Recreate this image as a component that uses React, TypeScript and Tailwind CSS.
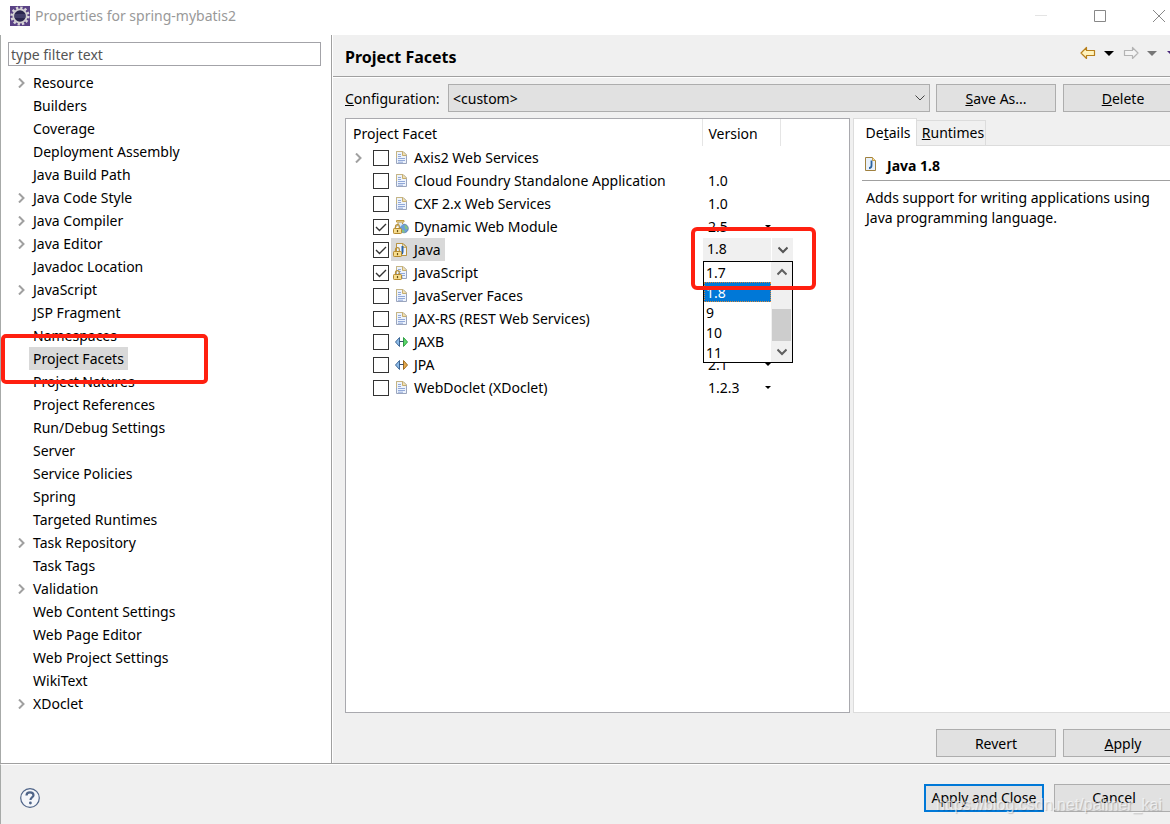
import { useState } from 'react';
import type { ReactNode } from 'react';
import clsx from 'clsx';

type IconKind = 'page' | 'web' | 'java' | 'pageLocked' | 'jaxb' | 'jpa';

interface Page {
  label: string;
  children?: boolean;
}

interface Facet {
  name: string;
  icon: IconKind;
  version?: string;
  picker?: boolean;
  checked?: boolean;
  children?: boolean;
}

const PAGES: Page[] = [
  { label: 'Resource', children: true },
  { label: 'Builders' },
  { label: 'Coverage' },
  { label: 'Deployment Assembly' },
  { label: 'Java Build Path' },
  { label: 'Java Code Style', children: true },
  { label: 'Java Compiler', children: true },
  { label: 'Java Editor', children: true },
  { label: 'Javadoc Location' },
  { label: 'JavaScript', children: true },
  { label: 'JSP Fragment' },
  { label: 'Namespaces' },
  { label: 'Project Facets' },
  { label: 'Project Natures' },
  { label: 'Project References' },
  { label: 'Run/Debug Settings' },
  { label: 'Server' },
  { label: 'Service Policies' },
  { label: 'Spring' },
  { label: 'Targeted Runtimes' },
  { label: 'Task Repository', children: true },
  { label: 'Task Tags' },
  { label: 'Validation', children: true },
  { label: 'Web Content Settings' },
  { label: 'Web Page Editor' },
  { label: 'Web Project Settings' },
  { label: 'WikiText' },
  { label: 'XDoclet', children: true },
];

const FACETS: Facet[] = [
  { name: 'Axis2 Web Services', icon: 'page', children: true },
  { name: 'Cloud Foundry Standalone Application', icon: 'page', version: '1.0' },
  { name: 'CXF 2.x Web Services', icon: 'page', version: '1.0' },
  { name: 'Dynamic Web Module', icon: 'web', version: '2.5', picker: true, checked: true },
  { name: 'Java', icon: 'java', checked: true },
  { name: 'JavaScript', icon: 'pageLocked', checked: true },
  { name: 'JavaServer Faces', icon: 'page' },
  { name: 'JAX-RS (REST Web Services)', icon: 'page' },
  { name: 'JAXB', icon: 'jaxb' },
  { name: 'JPA', icon: 'jpa', version: '2.1', picker: true },
  { name: 'WebDoclet (XDoclet)', icon: 'page', version: '1.2.3', picker: true },
];

const JAVA_VERSIONS = ['1.7', '1.8', '9', '10', '11'];

function Chevron({ dir, className }: { dir: 'right' | 'down' | 'up'; className?: string }) {
  const d = { right: 'M3 0.500l4.500 4.500L3 9.500', down: 'M.5 2.500L5 7l4.500-4.500', up: 'M.5 7.500L5 3l4.500 4.500' }[dir];
  return (
    <svg viewBox="0 0 10 10" className={clsx('h-[10px] w-[10px] shrink-0', className)} fill="none" stroke="currentColor" aria-hidden="true">
      <path d={d} />
    </svg>
  );
}

function Triangle({ className }: { className: string }) {
  return (
    <svg viewBox="0 0 10 5" className={className} fill="currentColor" aria-hidden="true">
      <path d="M0 0h10L5 5z" />
    </svg>
  );
}

function Lock() {
  return (
    <g>
      <path d="M2.500 10V7.500a1.900 1.900 0 0 1 3.800 0V10" fill="none" stroke="#b8913a" strokeWidth="1.200" />
      <rect x="0.500" y="9.500" width="8" height="5" rx="0.800" fill="#f7dd8e" stroke="#b58a2e" />
      <path d="M4.500 11v2.200" stroke="#6b5010" strokeWidth="1.200" />
    </g>
  );
}

function Sheet({ lines = true }: { lines?: boolean }) {
  return (
    <g>
      <path d="M3.500 1.500h6.500l3.500 3.500v8.500h-10z" fill="#edf3fc" stroke="#9aa5bd" />
      <path d="M3.500 8V1.500h6.500l3.500 3.500" fill="none" stroke="#c6b582" />
      <path d="M9.500 1.500V5.500h4" fill="#f3e0ae" stroke="#c6ae70" />
      {lines && <path d="M5 4.500h3M5 6.500h3M5 8.500h7M5 10.500h7M5 12.200h5" stroke="#91a8d8" />}
    </g>
  );
}

function FacetIcon({ kind }: { kind: IconKind }) {
  return (
    <svg viewBox="0 0 16 16" className="h-4 w-4 shrink-0" aria-hidden="true">
      {kind === 'page' && <Sheet />}
      {kind === 'pageLocked' && <><Sheet /><Lock /></>}
      {kind === 'java' && (
        <>
          <Sheet lines={false} />
          <path d="M13.500 5v8.500h-10V1.500h6.500z" fill="none" stroke="#b9933f" />
          <path d="M9.500 4v6c0 1.200-.5 1.800-1.500 2" fill="none" stroke="#2d62a3" strokeWidth="2" />
          <Lock />
        </>
      )}
      {kind === 'web' && (
        <>
          <circle cx="11" cy="9.500" r="4.300" fill="#6b9fd8" stroke="#5878a8" strokeWidth="0.800" />
          <path d="M11.500 6c2 0 3.500 2 3.300 4l-2 .5-1-2zM8.500 11l2.500 0 1 2.500-2 .3z" fill="#86c281" />
          <path d="M5.500 3h4v2.500L7 8 3 8z" fill="#dce9f8" />
          <path d="M3.500 1.500h7.500v1.500h-7.500z" fill="#faebb8" stroke="#c09a42" />
          <path d="M5 3.500v2L2 8.500M9.500 3.500V5" fill="none" stroke="#c09a42" />
          <Lock />
        </>
      )}
      {(kind === 'jaxb' || kind === 'jpa') && (
        <>
          <path d="M6.500 3.500v9L2.500 8z" fill="#8dbbe8" stroke="#3d6796" />
          <path
            d="M10.500 3.500v9l4-4.500z"
            fill={kind === 'jaxb' ? '#5bd867' : '#e5a94e'}
            stroke={kind === 'jaxb' ? '#2f9e45' : '#a06c1d'}
          />
          <path d="M6.500 7.500h4" stroke="#3c4f70" />
        </>
      )}
    </svg>
  );
}

function EclipseIcon() {
  return (
    <svg viewBox="0 0 20 20" className="h-5 w-5 shrink-0" aria-hidden="true">
      <rect width="20" height="20" fill="#5a4285" />
      <circle cx="10" cy="10" r="8.300" fill="none" stroke="#d8d5d8" strokeWidth="2.600" strokeDasharray="2.300 2.045" />
      <circle cx="10" cy="10" r="6.700" fill="#29244d" stroke="#d3d0d2" strokeWidth="1.800" />
      <path d="M4.500 9h11M4.500 11h11" stroke="#5d5684" />
    </svg>
  );
}

function Arrow({ flip, fill, stroke }: { flip?: boolean; fill: string; stroke: string }) {
  return (
    <svg viewBox="0 0 16 14" className={clsx('h-[14px] w-4', flip && '-scale-x-100')} aria-hidden="true">
      <path d="M1 7l5.500-5.500v3h8v5h-8v3z" fill={fill} stroke={stroke} strokeWidth="1.200" strokeLinejoin="round" />
    </svg>
  );
}

function Button({ children, primary }: { children: ReactNode; primary?: boolean }) {
  return (
    <button
      type="button"
      className={clsx(
        'h-7 w-[120px] shrink-0 whitespace-nowrap bg-[#e1e1e1] pt-px text-center',
        primary ? 'border-2 border-[#0078d7]' : 'border border-[#adadad]',
      )}
    >
      {children}
    </button>
  );
}

function TitleBar() {
  return (
    <header className="flex h-[35px] items-center justify-between pr-[5px] pl-[10px]">
      <h1 className="flex items-center gap-[5px] pb-[3px] text-[#999999]">
        <EclipseIcon /> Properties for spring-mybatis2
      </h1>
      <div className="flex gap-[47px] pb-[3px] text-[#888888]">
        <button type="button" aria-label="Minimize" className="text-[#e4e4e4]">
          <svg viewBox="0 0 12 12" className="h-3 w-3"><path d="M0 5.500h12" stroke="currentColor" /></svg>
        </button>
        <button type="button" aria-label="Maximize">
          <svg viewBox="0 0 12 12" className="h-3 w-3"><path d="M.5.5h11v11H.5z" fill="none" stroke="currentColor" /></svg>
        </button>
        <button type="button" aria-label="Close">
          <svg viewBox="0 0 12 12" className="h-3 w-3"><path d="M0 0l12 12M12 0L0 12" stroke="currentColor" /></svg>
        </button>
      </div>
    </header>
  );
}

function Sidebar() {
  const [active, setActive] = useState('Project Facets');
  return (
    <nav aria-label="Property pages" className="w-[332px] shrink-0 border-r border-l border-r-[#a0a0a0] border-l-[#a7aaa8] bg-white pt-[7px]">
      <div className="pr-[10px] pl-[7px]">
        <input
          type="text"
          aria-label="type filter text"
          placeholder="type filter text"
          className="h-6 w-full border border-[#a3a3a8] bg-white px-[2px] outline-none placeholder:text-[#555555]"
        />
      </div>
      <ul className="pt-[5px]">
        {PAGES.map((p) => (
          <li key={p.label} className="relative flex h-[23px] items-center pl-[15px]">
            <span className="w-[13px] text-[#a0a0a0]">
              {p.children && <Chevron dir="right" className="stroke-2" />}
            </span>
            <button
              type="button"
              onClick={() => setActive(p.label)}
              className={clsx('h-full px-1 whitespace-nowrap', active === p.label && 'bg-[#d9d9d9]')}
            >
              {p.label}
            </button>
            {p.label === 'Project Facets' && (
              <span className="pointer-events-none absolute -top-[13px] left-0 z-10 h-[50px] w-[207px] rounded-[5px] border-4 border-[#ff2010]" />
            )}
          </li>
        ))}
      </ul>
    </nav>
  );
}

function JavaVersionEditor({ value, onChange }: { value: string; onChange: (v: string) => void }) {
  return (
    <div className="absolute top-0 left-px z-10 w-[90px]">
      <div className="flex h-[23px] items-center bg-[#f0f0f0]">
        <input aria-label="Java version" readOnly value={value} className="h-full w-[69px] border-r border-white pb-[2px] pl-1 outline-none" />
        <button type="button" aria-label="Show versions" className="flex flex-1 justify-center text-[#555555]">
          <Chevron dir="down" className="stroke-2" />
        </button>
      </div>
      <div className="flex h-[102px] border border-black bg-white">
        <ul role="listbox" aria-label="Java versions" className="flex-1">
          {JAVA_VERSIONS.map((v) => (
            <li
              key={v}
              role="option"
              aria-selected={v === value}
              onClick={() => onChange(v)}
              className={clsx('h-5 pl-[2px] leading-[22px]', v === value && 'bg-[#0078d7] text-white outline-1 -outline-offset-1 outline-dotted outline-[#d98a3a]')}
            >
              {v}
            </li>
          ))}
        </ul>
        <div className="flex w-[21px] flex-col items-center justify-between bg-[#f0f0f0] text-[#606060]">
          <Chevron dir="up" className="mt-[5px] stroke-2" />
          <span className="mt-[26px] h-8 w-[19px] bg-[#cdcdcd]" />
          <Chevron dir="down" className="mb-[5px] stroke-2" />
        </div>
      </div>
      <span className="pointer-events-none absolute -top-[11px] -left-3 h-[63px] w-[125px] rounded-[6px] border-4 border-[#ff2010]" />
    </div>
  );
}

function FacetTable({ javaVersion, onVersion }: { javaVersion: string; onVersion: (v: string) => void }) {
  const [checked, setChecked] = useState(() => FACETS.filter((f) => f.checked).map((f) => f.name));
  const toggle = (name: string) =>
    setChecked((list) => (list.includes(name) ? list.filter((n) => n !== name) : [...list, name]));

  return (
    <div className="w-[505px] shrink-0 border border-[#a9a9ae] bg-white">
      <table className="w-full table-fixed border-collapse text-left">
        <colgroup>
          <col />
          <col className="w-[78px]" />
          <col className="w-[69px]" />
        </colgroup>
        <thead>
          <tr className="h-[27px]">
            <th className="border-r border-[#e5e5e5] p-0 pt-[2px] pl-[7px] font-normal">Project Facet</th>
            <th className="border-r border-[#e5e5e5] p-0 pt-[2px] pl-[6px] font-normal">Version</th>
            <td className="p-0" />
          </tr>
        </thead>
        <tbody>
          {FACETS.map((f) => (
            <tr key={f.name} className="h-[23px]">
              <td className="p-0">
                <div className="flex h-[23px] items-center">
                  <span className="w-[27px] shrink-0 pl-[7px] text-[#a0a0a0]">
                    {f.children && <Chevron dir="right" className="stroke-2" />}
                  </span>
                  <span className="relative h-4 w-4 shrink-0">
                    <input
                      id={f.name}
                      type="checkbox"
                      checked={checked.includes(f.name)}
                      onChange={() => toggle(f.name)}
                      className="block h-4 w-4 appearance-none border border-[#333333] bg-white"
                    />
                    {checked.includes(f.name) && (
                      <svg viewBox="0 0 16 16" className="pointer-events-none absolute inset-0 h-4 w-4" fill="none" stroke="#333333" strokeWidth="1.400">
                        <path d="M3 8l3.500 3.500L13 5" />
                      </svg>
                    )}
                  </span>
                  <label
                    htmlFor={f.name}
                    className={clsx('ml-[2px] flex h-full items-center gap-[5px] pr-1 pl-[2px] whitespace-nowrap', f.name === 'Java' && 'bg-[#d9d9d9]')}
                  >
                    <FacetIcon kind={f.icon} /> {f.name}
                  </label>
                </div>
              </td>
              <td className="relative p-0">
                {f.name === 'Java' && <JavaVersionEditor value={javaVersion} onChange={onVersion} />}
                {f.picker ? (
                  <button type="button" className="flex h-[23px] w-full items-center justify-between pr-[9px] pl-[6px]">
                    {f.version}
                    <Triangle className="h-[3px] w-[6px]" />
                  </button>
                ) : (
                  <span className="pl-[6px]">{f.version}</span>
                )}
              </td>
              <td className="p-0" />
            </tr>
          ))}
        </tbody>
      </table>
    </div>
  );
}

function DetailsPane({ version }: { version: string }) {
  return (
    <section className="flex min-w-0 flex-1 flex-col border-b border-l border-[#dcdcdc]">
      <div role="tablist" className="flex h-7 items-end">
        <button type="button" role="tab" aria-selected="true" className="h-full w-[63px] border-t border-r border-[#dcdcdc] bg-white pl-[6px]">
          De<u>t</u>ails
        </button>
        <button type="button" role="tab" aria-selected="false" className="h-[26px] w-[69px] border-t border-r border-b border-[#dcdcdc] bg-[#f0f0f0] pl-1">
          <u>R</u>untimes
        </button>
        <span className="h-full flex-1 border-b border-[#dcdcdc]" />
      </div>
      <div role="tabpanel" className="flex-1 bg-white pt-2 pl-2">
        <h3 className="flex h-[27px] items-center gap-[9px] border-b border-[#a0a0a0] pb-[2px] font-bold">
          <svg viewBox="0 0 16 16" className="mb-1 h-4 w-4" aria-hidden="true">
            <path d="M3.500 1.500h7l3 3v10h-10z" fill="#e8f1fb" stroke="#a0813f" />
            <path d="M10.500 1.500v3h3" fill="#f3dfa4" stroke="#c8a04a" />
            <path d="M9.500 4.500v5c0 1.700-.8 2.500-2.500 2.500" fill="none" stroke="#2b629d" strokeWidth="1.800" />
          </svg>
          Java {version}
        </h3>
        <p className="max-w-[310px] pt-[7px] pl-1 leading-5">
          Adds support for writing applications using Java programming language.
        </p>
      </div>
    </section>
  );
}

function FacetsPage() {
  const [version, setVersion] = useState('1.8');
  return (
    <main className="ml-px flex min-w-0 flex-1 flex-col overflow-hidden bg-[#f0f0f0]">
      <div className="flex h-[42px] items-center justify-between border-b border-[#a0a0a0] pl-3">
        <h2 className="pt-[2px] text-base font-bold">Project Facets</h2>
        <div className="-mr-[7px] flex shrink-0 items-center pb-[5px]">
          <button type="button" aria-label="Back"><Arrow fill="#fff3bd" stroke="#b8801c" /></button>
          <button type="button" aria-label="Back history" className="pl-2"><Triangle className="h-[5px] w-[10px]" /></button>
          <button type="button" aria-label="Forward" className="pl-[9px]"><Arrow flip fill="#f4f4f4" stroke="#b4b4b4" /></button>
          <button type="button" aria-label="Forward history" className="pl-2 text-[#777777]"><Triangle className="h-[5px] w-[10px]" /></button>
          <button type="button" aria-label="View menu" className="pl-[10px] text-[#4b2a7b]"><Triangle className="h-[5px] w-[10px]" /></button>
        </div>
      </div>
      <div className="-mr-[13px] flex items-center border-t border-white pt-[6px] pl-3">
        <label htmlFor="configuration" className="w-[103px] shrink-0 pt-px"><u>C</u>onfiguration:</label>
        <div className="relative min-w-0 flex-1">
          <select id="configuration" className="block h-7 w-full appearance-none border border-[#adadad] bg-[#e1e1e1] px-1 pt-px outline-none">
            <option>&lt;custom&gt;</option>
          </select>
          <Chevron dir="down" className="pointer-events-none absolute top-[9px] right-[5px] text-[#444444]" />
        </div>
        <div className="ml-[6px] flex gap-[7px]">
          <Button><u>S</u>ave As...</Button>
          <Button><u>D</u>elete</Button>
        </div>
      </div>
      <div className="-mr-[13px] flex flex-1 gap-[3px] pt-[6px] pl-3">
        <FacetTable javaVersion={version} onVersion={setVersion} />
        <DetailsPane version={version} />
      </div>
      <div className="-mr-[13px] flex justify-end gap-[7px] pt-4 pb-[6px]">
        <Button>Revert</Button>
        <Button><u>A</u>pply</Button>
      </div>
    </main>
  );
}

export default function App() {
  return (
    <div className="flex min-h-screen flex-col overflow-hidden bg-white font-['Noto_Sans',sans-serif] text-sm text-black">
      <TitleBar />
      <div className="flex flex-1">
        <Sidebar />
        <FacetsPage />
      </div>
      <footer className="relative border-t border-[#a0a0a0] bg-[#f0f0f0]">
        <div className="-mr-1 flex h-[60px] items-center justify-between border-t border-l border-t-white border-l-[#a7aaa8] pt-[6px] pl-[19px]">
          <button type="button" aria-label="Help">
            <svg viewBox="0 0 20 20" className="h-5 w-5" fill="none" stroke="#4f6488">
              <circle cx="10" cy="10" r="9.300" fill="#f4f6fa" strokeWidth="1.200" />
              <path d="M6.500 7.500C6.500 5.300 8 4.300 10 4.300s3.500 1.200 3.500 3c0 2.200-3 2.200-3 4.700" strokeWidth="2.200" />
              <circle cx="10.400" cy="15" r="1.400" fill="#4f6488" stroke="none" />
            </svg>
          </button>
          <div className="flex gap-[10px]">
            <Button primary>Apply and Close</Button>
            <Button>Cancel</Button>
          </div>
        </div>
        <span className="pointer-events-none absolute right-2 bottom-[7px] font-['Liberation_Sans',sans-serif] text-base text-white/60 [text-shadow:1px_1px_1px_#00000033]">
          https://blog.csdn.net/palmer_kai
        </span>
      </footer>
    </div>
  );
}
